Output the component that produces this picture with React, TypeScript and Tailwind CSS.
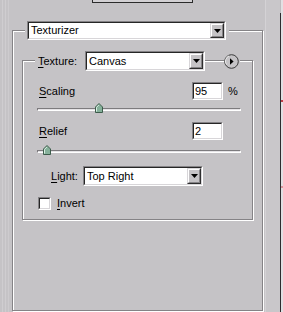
import React from "react";

function Sunken({ className, children }: { className: string; children?: React.ReactNode }) {
  return (
    <div className={"border border-t-[#858386] border-l-[#858386] border-r-white border-b-white shrink-0 " + className}>
      <div className="h-full w-full border border-t-[#262626] border-l-[#262626] border-r-[#d8d6d9] border-b-[#d8d6d9] bg-white flex items-center">
        {children}
      </div>
    </div>
  );
}

function Dropdown({ text, className }: { text: string; className: string }) {
  return (
    <Sunken className={className}>
      <span className="pl-[2px] flex-1 leading-none whitespace-nowrap">{text}</span>
      <div className="h-full w-[14px] border border-t-[#d8d6d9] border-l-[#d8d6d9] border-r-[#2e2e2e] border-b-[#2e2e2e]">
        <div className="h-full w-full border border-t-white border-l-white border-r-[#858386] border-b-[#858386] bg-[#c5c3c6] flex items-center justify-center">
          <svg width="7" height="4" viewBox="0 0 7 4">
            <path d="M0 0H7L3.5 4Z" fill="#000" />
          </svg>
        </div>
      </div>
    </Sunken>
  );
}

function Thumb() {
  return (
    <svg width="8" height="10" viewBox="0 0 8 10">
      <path d="M0.5 9.5V4L4 0.5L7.5 4V9.5Z" fill="#86b19b" stroke="#3d5c4b" />
      <path d="M1.5 8.5V4.4L4 1.9" fill="none" stroke="#d9efe2" />
    </svg>
  );
}

function Slider({ thumbLeft }: { thumbLeft: string }) {
  return (
    <div className="relative ml-[14px] w-[204px] h-[11px] pt-[5px] shrink-0">
      <div className="h-[3px] border-t border-l border-t-[#7d7b7e] border-l-[#7d7b7e] border-b border-r border-b-white border-r-white bg-[#e4e2e5]" />
      <div className={"absolute top-0 " + thumbLeft}>
        <Thumb />
      </div>
    </div>
  );
}

export default function App() {
  return (
    <div className="w-[283px] h-[312px] bg-[#c5c3c6] flex overflow-hidden [font-family:'Liberation_Sans',Arial,sans-serif] text-[11px] text-black">
      {/* left strip */}
      <div className="w-[12px] h-full flex shrink-0">
        <div className="w-[2px]" />
        <div className="w-[1px] bg-[#cfcdd0]" />
        <div className="w-[2px]" />
        <div className="w-[1px] bg-[#cfcdd0]" />
        <div className="w-[2px]" />
        <div className="w-[1px] bg-[#cdcbce]" />
        <div className="w-[3px]" />
      </div>

      {/* main column */}
      <div className="w-[251px] shrink-0 flex flex-col">
        <div className="ml-[80px] w-[101px] h-[3px] border-x border-b border-[#2b2b2b] bg-[#d2d0d3]" />

        <div className="mt-[27px] w-[251px] h-[281px] border border-[#858386] shadow-[inset_1px_1px_0_#ffffff,1px_1px_0_#ffffff] flex flex-col">
          {/* legend dropdown */}
          <div className="-mt-[10px] ml-[12px] self-start pl-[2px] pr-[3px] bg-[#c5c3c6]">
            <Dropdown text="Texturizer" className="w-[199px] h-[19px]" />
          </div>

          {/* inner group */}
          <div className="mt-[20px] ml-[9px] w-[231px] h-[160px] border border-[#858386] shadow-[inset_1px_1px_0_#ffffff,1px_1px_0_#ffffff] flex flex-col">
            {/* header row */}
            <div className="-mt-[10px] h-[20px] flex items-center shrink-0">
              <div className="ml-[12px] h-full pl-[3px] flex items-center bg-[#c5c3c6]">
                <span className="w-[47px] whitespace-nowrap">
                  <span className="underline underline-offset-[2px]">T</span>exture:
                </span>
                <Dropdown text="Canvas" className="w-[120px] h-[20px]" />
              </div>
              <div className="w-[19px]" />
              <div className="h-full w-[16px] bg-[#c5c3c6] flex items-center">
                <svg width="15" height="15" viewBox="0 0 15 15">
                  <circle cx="7.5" cy="7.5" r="6.8" fill="none" stroke="#3a3a3a" strokeWidth="1" />
                  <path d="M2.3 10.5A6 6 0 0 1 5 1.8" fill="none" stroke="#ffffff" strokeWidth="0.8" />
                  <path d="M6 4.2L9.6 7.5L6 10.8Z" fill="#000" />
                </svg>
              </div>
            </div>

            {/* Scaling */}
            <div className="mt-[11px] h-[18px] flex items-center shrink-0">
              <span className="flex-1 pl-[16px]">
                <span className="underline underline-offset-[2px]">S</span>caling
              </span>
              <Sunken className="w-[31px] h-[18px]">
                <span className="pl-[1px] leading-none">95</span>
              </Sunken>
              <span className="ml-[5px] w-[24px]">%</span>
            </div>
            <div className="mt-[3px]">
              <Slider thumbLeft="left-[58px]" />
            </div>

            {/* Relief */}
            <div className="mt-[8px] h-[18px] flex items-center shrink-0">
              <span className="flex-1 pl-[16px]">
                <span className="underline underline-offset-[2px]">R</span>elief
              </span>
              <Sunken className="w-[31px] h-[18px]">
                <span className="pl-[1px] leading-none">2</span>
              </Sunken>
              <span className="ml-[5px] w-[24px]" />
            </div>
            <div className="mt-[5px]">
              <Slider thumbLeft="left-[6px]" />
            </div>

            {/* Light */}
            <div className="mt-[10px] h-[20px] flex items-center pl-[28px] shrink-0">
              <span className="w-[32px] whitespace-nowrap">
                <span className="underline underline-offset-[2px]">L</span>ight:
              </span>
              <Dropdown text="Top Right" className="w-[120px] h-[20px]" />
            </div>

            {/* Invert */}
            <div className="mt-[11px] h-[13px] flex items-center pl-[15px] shrink-0">
              <Sunken className="w-[13px] h-[13px]" />
              <span className="ml-[6px]">
                <span className="underline underline-offset-[2px]">I</span>nvert
              </span>
            </div>
          </div>
        </div>
      </div>

      {/* right strip */}
      <div className="w-[20px] h-full flex shrink-0">
        <div className="w-[2px]" />
        <div className="w-[1px] bg-[#d4d2d5]" />
        <div className="w-[14px] bg-[#c9c7ca]" />
        <div className="w-[1px] flex flex-col">
          <div className="h-[13px] bg-[#bdbbbe]" />
          <div className="flex-1 bg-[#2e2c2f]" />
        </div>
        <div className="w-[2px] bg-[#e2e0e3] flex flex-col">
          <div className="mt-[100px] h-[2px] bg-[#c0404a]" />
          <div className="mt-[84px] h-[2px] bg-[#d89aa0]" />
        </div>
      </div>
    </div>
  );
}
